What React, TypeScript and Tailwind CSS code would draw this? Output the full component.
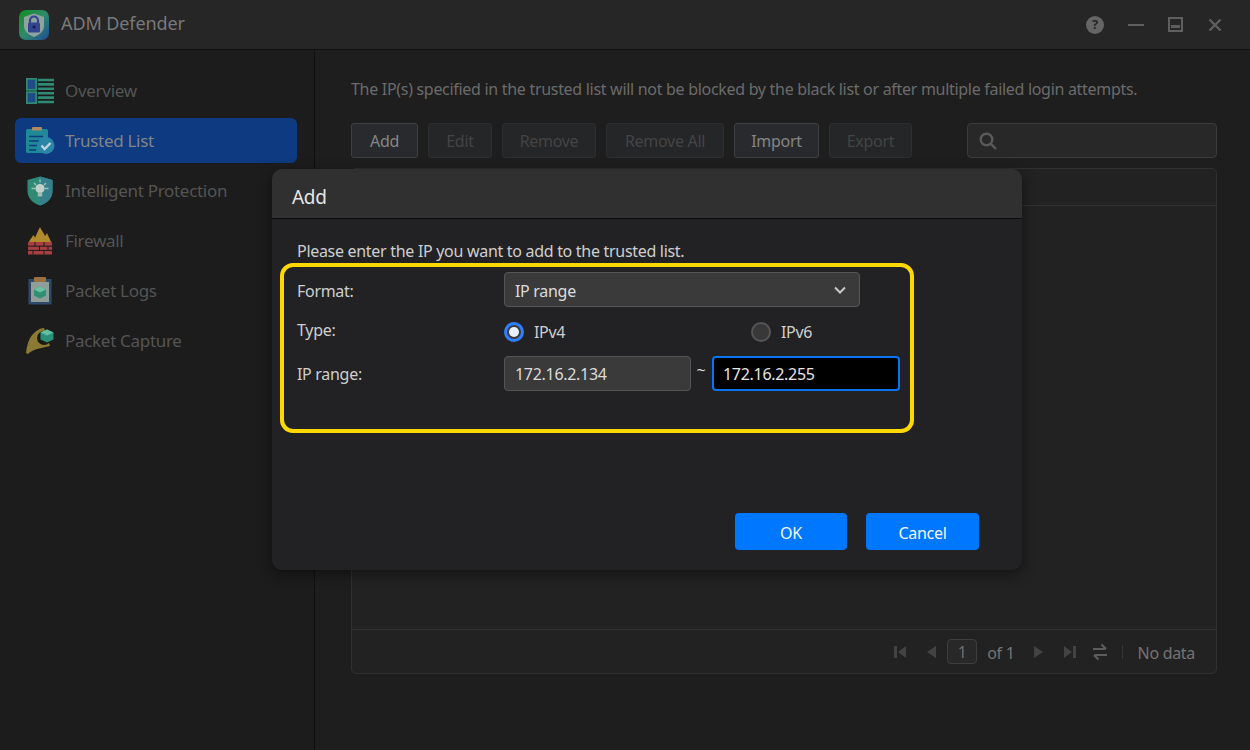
import React from "react";

const OverviewIcon = () => (
  <svg width="28" height="26" viewBox="0 0 28 26">
    <rect x="0.8" y="0.8" width="9.400" height="11" fill="#1f4c86" stroke="#2e8a72" strokeWidth="1.800" />
    <rect x="0.8" y="14.200" width="9.400" height="11" fill="#1f4c86" stroke="#2e8a72" strokeWidth="1.800" />
    <path d="M12 2h16M12 6.400h16M12 10.800h16M12 15.200h16M12 19.600h16M12 24h16" stroke="#2e8a72" strokeWidth="2.600" />
  </svg>
);
const TrustedIcon = () => (
  <svg width="30" height="28" viewBox="0 0 30 28">
    <rect x="1" y="2" width="22" height="24" rx="1.500" fill="#1f8a96" />
    <rect x="7" y="0" width="10" height="3.500" rx="1" fill="#b08a5e" />
    <path d="M4 9.500h14M4 14h10M4 18.500h8M4 23h7" stroke="#0d3a80" strokeWidth="1.600" />
    <circle cx="21" cy="18.500" r="8.500" fill="#2a86a8" />
    <path d="M16.500 18.500l3.200 3.500 5.800-6" fill="none" stroke="#c4d4dc" strokeWidth="2.400" />
  </svg>
);
const ProtectionIcon = () => (
  <svg width="26" height="30" viewBox="0 0 26 30">
    <path d="M13 0.500 25.500 4V15c0 7-5 12-12.500 14.500C5.500 27 .5 22 .5 15V4Z" fill="#2f8a76" />
    <path d="M13 0.500 25.500 4V15c0 7-5 12-12.500 14.500Z" fill="#36808e" />
    <circle cx="13" cy="12.500" r="4.600" fill="#c2d0ca" />
    <rect x="10.800" y="16.500" width="4.400" height="4" fill="#a5b8b0" />
    <path d="M13 3.500v3M4.500 12.500h3.500M18 12.500h3.500M7 7l2 2M19 7l-2 2" stroke="#9cc4b6" strokeWidth="1.300" />
  </svg>
);
const FirewallIcon = () => (
  <svg width="26" height="28" viewBox="0 0 26 28">
    <path d="M2 15c1-3 3-4 4-7 1 1 2 2 2 3 1-3 3-7 5-11 1 3 4 6 5 9 1-1 1-2 2-3 1 3 3 6 4 9Z" fill="#b08a2c" />
    <path d="M1 15h24v12.500H1z" fill="#a63e42" />
    <path d="M1 19.200h24M1 23.400h24M8 15v4.200M17 15v4.200M12.500 19.200v4.200M21 19.200v4.200M6 23.400v4.100M17 23.400v4.100" stroke="#1c1c1c" strokeWidth="1" />
  </svg>
);
const LogsIcon = () => (
  <svg width="24" height="28" viewBox="0 0 24 28">
    <rect x="0.500" y="2" width="23" height="25.500" fill="#2d4a6a" />
    <rect x="3" y="5" width="18" height="20" fill="#8f9c98" />
    <rect x="6" y="0" width="12" height="5" rx="1" fill="#99703e" />
    <path d="M12 9.500l6 3v6l-6 3-6-3v-6Z" fill="#2e8f74" />
    <path d="M6 12.500l6 3 6-3-6-3Z" fill="#6cc0a4" />
  </svg>
);
const CaptureIcon = () => (
  <svg width="29" height="29" viewBox="0 0 29 29">
    <path d="M0 27C1 19 3 12 7 8c3-3 7-6 11-6l6 18c-4 1-9 2-13 3-4 1-7 3-9 5Z" fill="#8c7a32" />
    <circle cx="18" cy="12" r="7" fill="#1a1a12" />
    <path d="M21 3.500l6.500 3v7l-6.500 3-6.500-3v-7Z" fill="#2a8f78" />
    <path d="M14.500 6.500l6.500 3 6.500-3-6.500-3Z" fill="#63bfa0" />
  </svg>
);

const AppLogo = () => (
  <svg width="30" height="30" viewBox="0 0 30 30">
    <defs>
      <linearGradient id="logoBg" x1="0" y1="0" x2="1" y2="1">
        <stop offset="0" stopColor="#0f8f1e" />
        <stop offset="0.5" stopColor="#2f8a6a" />
        <stop offset="1" stopColor="#1f4a9a" />
      </linearGradient>
    </defs>
    <rect width="30" height="30" rx="7" fill="url(#logoBg)" />
    <path d="M15 3.500 25 7v9c0 5-4 8.500-10 11C9 24.500 5 21 5 16V7Z" fill="#8fa3a0" />
    <path d="M11 13v-2.500a4 4 0 0 1 8 0V13" fill="none" stroke="#33458f" strokeWidth="2.200" />
    <rect x="9" y="12.500" width="12" height="10" rx="1.500" fill="#33458f" />
    <circle cx="15" cy="17" r="1.500" fill="#141f50" />
  </svg>
);

const navItems = [
  { label: "Overview", icon: <OverviewIcon /> },
  { label: "Trusted List", icon: <TrustedIcon />, active: true },
  { label: "Intelligent Protection", icon: <ProtectionIcon /> },
  { label: "Firewall", icon: <FirewallIcon /> },
  { label: "Packet Logs", icon: <LogsIcon /> },
  { label: "Packet Capture", icon: <CaptureIcon /> },
];

const toolbar = [
  { label: "Add", w: "w-[67px]", on: true },
  { label: "Edit", w: "w-[64px]" },
  { label: "Remove", w: "w-[94px]" },
  { label: "Remove All", w: "w-[118px]" },
  { label: "Import", w: "w-[85px]", on: true },
  { label: "Export", w: "w-[83px]" },
];

const PagerIcon = ({ d }: { d: string }) => (
  <svg width="14" height="16" viewBox="0 0 14 16" fill="#434343">
    <path d={d} />
  </svg>
);

export default function App() {
  return (
    <div className="relative flex h-[750px] w-[1250px] flex-col overflow-hidden bg-[#1e1e1e] font-['Noto_Sans',sans-serif] text-[16px] tracking-[-0.3px]">
      <header className="flex h-[50px] shrink-0 items-center border-b border-[#111111] bg-[#262626] pl-[19px] pr-[27px]">
        <AppLogo />
        <span className="mb-[2px] ml-[12px] text-[18px] tracking-[-0.1px] text-[#797979]">ADM Defender</span>
        <div className="ml-auto flex items-center gap-[24px]">
          <span className="flex h-[18px] w-[18px] items-center justify-center rounded-full bg-[#656565] text-[13px] font-bold leading-none text-[#262626]">?</span>
          <span className="h-[2px] w-[16px] bg-[#5f5f5f]" />
          <span className="flex h-[15px] w-[15px] items-end border-2 border-[#5f5f5f] px-[1px] pb-[2px]">
            <span className="h-[3px] w-full bg-[#5f5f5f]" />
          </span>
          <svg width="16" height="16" viewBox="0 0 16 16" stroke="#5f5f5f" strokeWidth="2.400">
            <path d="M2.500 2.500l11 11M13.500 2.500l-11 11" />
          </svg>
        </div>
      </header>

      <div className="flex min-h-0 flex-1">
        <aside className="flex w-[315px] shrink-0 flex-col gap-[5px] border-r border-[#111111] bg-[#1c1c1c] px-[15px] pt-[18px]">
          {navItems.map((item) => (
            <div
              key={item.label}
              className={
                item.active
                  ? "flex h-[45px] w-[282px] items-center rounded-[6px] bg-[#0d3a80] pl-[10px] text-[#848484]"
                  : "flex h-[45px] w-[282px] items-center rounded-[6px] pl-[10px] text-[#545454]"
              }
            >
              <span className="flex w-[30px] items-center justify-center">{item.icon}</span>
              <span className="ml-[10px] text-[17px]">{item.label}</span>
            </div>
          ))}
        </aside>

        <main className="flex min-w-0 flex-1 flex-col pl-[36px] pr-[33px]">
          <p className="mt-[28px] h-[22px] leading-[22px] text-[#6b6b6b]">
            The IP(s) specified in the trusted list will not be blocked by the black list or after multiple failed login attempts.
          </p>
          <div className="mt-[23px] flex h-[35px] gap-[10px]">
            {toolbar.map((b) => (
              <div
                key={b.label}
                className={
                  b.on
                    ? `flex ${b.w} items-center justify-center rounded-[3px] border border-[#3d3f42] bg-[#292a2d] text-[#858585]`
                    : `flex ${b.w} items-center justify-center rounded-[3px] border border-[#2d2e30] bg-[#252628] text-[#444444]`
                }
              >
                {b.label}
              </div>
            ))}
            <div className="ml-auto flex w-[250px] items-center rounded-[4px] border border-[#3c3c3c] bg-[#282828] pl-[11px]">
              <svg width="18" height="18" viewBox="0 0 18 18" fill="none" stroke="#5a5a5a" strokeWidth="2.400">
                <circle cx="7.500" cy="7.500" r="5.800" />
                <path d="M12 12l5 5" />
              </svg>
            </div>
          </div>
          <section className="mt-[10px] flex h-[506px] flex-col rounded-[5px] border border-[#303030] bg-[#222222]">
            <div className="h-[37px] border-b border-[#303030]" />
            <div className="flex-1" />
            <div className="flex h-[44px] items-center justify-end border-t border-[#303030] pr-[21px] text-[#747474]">
              <PagerIcon d="M1 2h3v12H1zM13 2v12L5 8z" />
              <span className="ml-[17px]"><PagerIcon d="M12 2v12L3 8z" /></span>
              <span className="ml-[9px] flex h-[25px] w-[30px] items-center justify-center rounded-[4px] border border-[#3e3e3e] bg-[#282828] text-[#6e6e6e]">1</span>
              <span className="ml-[10px] mr-[17px] mt-[2px]">of 1</span>
              <PagerIcon d="M2 2v12l9-6z" />
              <span className="ml-[17px]"><PagerIcon d="M1 2v12l8-6zM10 2h3v12h-3z" /></span>
              <svg width="16" height="18" viewBox="0 0 16 18" fill="none" stroke="#5c5c5c" strokeWidth="2.200" className="ml-[15px]">
                <path d="M1 6h12.500M9.500 1.500 14 6M15 12H2.500M6.500 16.500 2 12" />
              </svg>
              <span className="ml-[14px] h-[14px] w-px bg-[#363636]" />
              <span className="ml-[15px] mt-[2px]">No data</span>
            </div>
          </section>
        </main>
      </div>

      <div className="absolute left-[272px] top-[169px] flex h-[401px] w-[750px] flex-col overflow-hidden rounded-[10px] bg-[#222224] text-[#cfcfcf] shadow-[0_4px_14px_rgba(0,0,0,0.45)]">
        <div className="flex h-[50px] shrink-0 items-center border-b border-[#0c0c0c] bg-[#303030] pl-[20px] pt-[8px] text-[19px] text-[#e6e6e6]">Add</div>
        <div className="flex flex-1 flex-col pl-[25px]">
          <p className="mt-[22px] h-[20px] leading-[20px]">Please enter the IP you want to add to the trusted list.</p>
          <div className="mt-[11px] flex h-[35px] items-center">
            <span className="mt-[3px] w-[207px]">Format:</span>
            <div className="flex h-[35px] w-[356px] items-center justify-between rounded-[4px] border border-[#555555] bg-[#3a3a3a] pl-[10px] pr-[12px] pt-[2px] text-[#dcdcdc]">
              IP range
              <svg width="14" height="14" viewBox="0 0 14 14" fill="none" stroke="#c8c8c8" strokeWidth="2" className="mb-[2px]">
                <path d="M2 4.500 7 9.500l5-5" />
              </svg>
            </div>
          </div>
          <div className="mt-[12px] flex h-[26px] items-center">
            <span className="mb-[5px] w-[207px]">Type:</span>
            <div className="flex w-[247px] items-center">
              <span className="flex h-[20px] w-[20px] items-center justify-center rounded-full border-[3px] border-[#2f7fff] bg-[#3a3a3a]">
                <span className="h-[10px] w-[10px] rounded-full bg-[#e8f1ff]" />
              </span>
              <span className="ml-[10px]">IPv4</span>
            </div>
            <span className="h-[20px] w-[20px] rounded-full border-2 border-[#555555] bg-[#383838]" />
            <span className="ml-[10px]">IPv6</span>
          </div>
          <div className="mt-[11px] flex h-[35px] items-center">
            <span className="w-[207px]">IP range:</span>
            <div className="flex h-[35px] w-[187px] items-center rounded-[4px] border border-[#555555] bg-[#3a3a3a] pl-[10px] text-[#dcdcdc]">172.16.2.134</div>
            <span className="mb-[8px] mr-[1px] w-[20px] text-center">~</span>
            <div className="flex h-[35px] w-[188px] items-center rounded-[4px] border-2 border-[#0a74f0] bg-[#000000] pl-[9px] text-[#e6e6e6]">172.16.2.255</div>
          </div>
          <div className="mb-[20px] mr-[43px] mt-auto flex justify-end gap-[19px]">
            <div className="flex h-[37px] w-[112px] items-center justify-center rounded-[4px] bg-[#0077ff] pt-[3px] text-[#f4f8ff]">OK</div>
            <div className="flex h-[37px] w-[113px] items-center justify-center rounded-[4px] bg-[#0077ff] pt-[3px] text-[#f4f8ff]">Cancel</div>
          </div>
        </div>
      </div>

      <div className="absolute left-[280px] top-[263px] h-[170px] w-[634px] rounded-[13px] border-[4px] border-[#ffd800]" />
    </div>
  );
}
